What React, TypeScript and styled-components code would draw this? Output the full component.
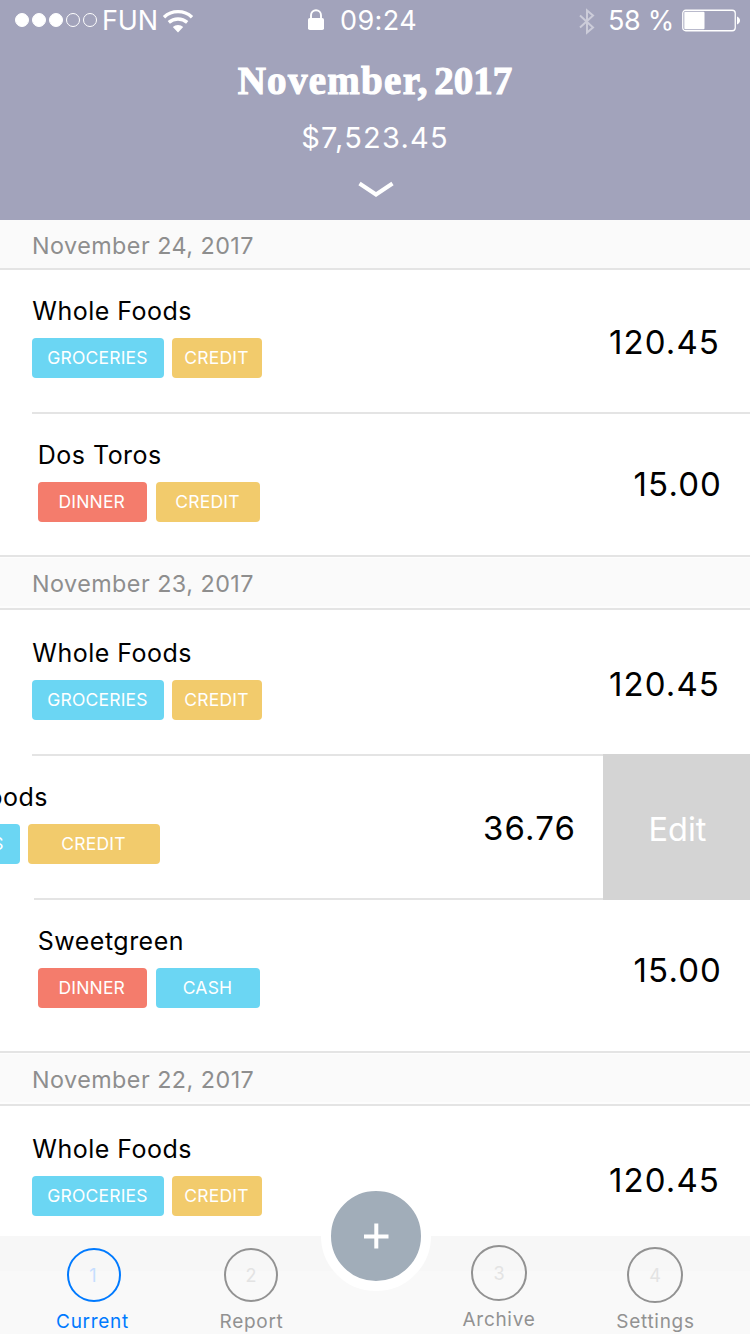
import React from "react";
import styled, { createGlobalStyle } from "styled-components";

const GlobalStyle = createGlobalStyle`
  * { box-sizing: border-box; }
  body { margin: 0; background: #fff; font-family: Inter, "Liberation Sans", sans-serif; }
`;

const colors = {
  header: "#a2a3bb",
  line: "#e4e4e4",
  blue: "#6bd6f3",
  yellow: "#f2cb6c",
  red: "#f47c6c",
  active: "#007aff",
  idle: "#929292",
};

const Screen = styled.div`
  width: 750px;
  height: 1334px;
  display: flex;
  flex-direction: column;
  overflow: hidden;
  background: #fff;
`;

const Header = styled.header`
  height: 220px;
  flex: none;
  background: ${colors.header};
  color: #fff;
  display: flex;
  flex-direction: column;
  align-items: center;
`;

const StatusBar = styled.div`
  width: 100%;
  height: 40px;
  flex: none;
  display: grid;
  grid-template-columns: 307px 1fr auto;
  font-size: 27px;
  line-height: 38px;
  padding: 0 10px 0 0;
`;

const StatusGroup = styled.div`
  display: flex;
  align-items: center;
  white-space: pre;
`;

const StatusText = styled.span<{ $left: number; $spacing: number }>`
  margin-left: ${(p) => p.$left}px;
  padding-top: 2px;
  letter-spacing: ${(p) => p.$spacing}px;
`;

const Signal = styled.div`
  display: flex;
  gap: 3px;
  padding-left: 15px;
`;

const SignalDot = styled.i<{ $on: boolean }>`
  width: 14px;
  height: 14px;
  border-radius: 50%;
  border: 1px solid #fff;
  background: ${(p) => (p.$on ? "#fff" : "transparent")};
`;

const Month = styled.h1`
  margin: 21px 0 0;
  font-family: "Liberation Serif", serif;
  font-weight: 700;
  font-size: 39px;
  line-height: 40px;
  letter-spacing: 1.3px;
  word-spacing: -5.5px;
  -webkit-text-stroke: 1.1px #fff;
`;

const Year = styled.span`
  letter-spacing: 0;
`;

const Total = styled.div`
  margin-top: 17px;
  font-size: 29px;
  line-height: 40px;
  letter-spacing: 1.2px;
`;

const Chevron = styled.svg`
  margin: 21px 0 0 1px;
`;

const List = styled.main`
  flex: 1;
  min-height: 0;
  overflow: hidden;
`;

const DayHeader = styled.h2<{ $height: number; $pad: number; $edged: boolean }>`
  margin: 0;
  height: ${(p) => p.$height}px;
  padding: ${(p) => p.$pad}px 0 0 32px;
  border-bottom: 2px solid ${colors.line};
  background: #fafafa;
  box-shadow: ${(p) => (p.$edged ? "inset 0 1px #fdfdfd, inset 0 -2px #fdfdfd" : "none")};
  color: #8e8e8e;
  font-size: 23.3px;
  font-weight: 400;
  line-height: 30px;
  letter-spacing: 0.48px;
`;

const Entry = styled.div<{ $height: number; $line: number }>`
  display: flex;
  height: ${(p) => p.$height}px;
  background:
    linear-gradient(${colors.line}, ${colors.line}) ${(p) => p.$line}px 100% / 100% 2px no-repeat;
`;

const EntryBody = styled.div<{ $top: number; $left: number; $right: number; $shift: number }>`
  width: 750px;
  flex: none;
  margin-left: ${(p) => -p.$shift}px;
  padding: ${(p) => `${p.$top}px ${p.$right}px 0 ${p.$left}px`};
  display: flex;
  justify-content: space-between;
  align-items: flex-start;
`;

const Name = styled.div`
  padding-left: 0.3px;
  font-size: 25px;
  line-height: 30px;
  letter-spacing: 0.48px;
  color: #000;
`;

const Tags = styled.div<{ $gap: number }>`
  display: flex;
  gap: ${(p) => p.$gap}px;
  margin-top: 12px;
`;

const Tag = styled.span<{ $color: string; $width: number }>`
  width: ${(p) => p.$width}px;
  height: 40px;
  padding-right: 1px;
  border-radius: 4px;
  background: ${(p) => p.$color};
  color: #fff;
  font-size: 17.5px;
  line-height: 40px;
  letter-spacing: 0.2px;
  text-align: center;
`;

const Amount = styled.div<{ $top: number }>`
  margin-top: ${(p) => p.$top}px;
  font-size: 33px;
  line-height: 40px;
  letter-spacing: 1.1px;
  color: #000;
`;

const EditButton = styled.button`
  width: 147px;
  flex: none;
  margin: -2px 0 0 -3px;
  padding: 4px 0 0 2px;
  border: 0;
  position: relative;
  background: #d4d4d4;
  color: #fff;
  font: 400 32.5px Inter, sans-serif;
`;

const TabBar = styled.nav`
  position: relative;
  height: 98px;
  flex: none;
  display: grid;
  grid-template-columns: 185px 133px 1fr 124px 189px;
  background: linear-gradient(#f7f7f7 35px, #f9f9f9 35px);
`;

const TabItem = styled.div<{ $active?: boolean; $top: number }>`
  display: flex;
  flex-direction: column;
  align-items: center;
  padding-top: ${(p) => p.$top}px;
  color: ${(p) => (p.$active ? colors.active : colors.idle)};
`;

const TabCircle = styled.div<{ $size: number; $nudge: number }>`
  width: ${(p) => p.$size}px;
  height: ${(p) => p.$size}px;
  margin-left: ${(p) => p.$nudge}px;
  border: 2px solid currentColor;
  border-radius: 50%;
  display: flex;
  align-items: center;
  justify-content: center;
`;

const TabNumber = styled.span<{ $active?: boolean }>`
  padding: 1px ${(p) => (p.$active ? 2 : 0)}px 0 0;
  font-size: 18px;
  color: ${(p) => (p.$active ? "#c6deff" : "#e3e3e3")};
`;

const TabLabel = styled.span<{ $top: number }>`
  margin-top: ${(p) => p.$top}px;
  font-size: 19px;
  line-height: 26px;
  letter-spacing: 0.7px;
`;

const AddButton = styled.button`
  position: absolute;
  left: 321px;
  top: -55px;
  width: 110px;
  height: 110px;
  border: 10px solid #fff;
  border-radius: 50%;
  background: #a1adb9;
  padding: 0;
  display: flex;
  align-items: center;
  justify-content: center;
`;

type TagData = { label: string; color: string; width: number };
type EntryData = {
  name: string;
  amount: string;
  tags: TagData[];
  height: number;
  line: number;
  top: number;
  left?: number;
  right?: number;
  gap?: number;
  amountTop: number;
  swiped?: boolean;
};
type Day = { date: string; height: number; pad: number; entries: EntryData[] };

const groceries: TagData = { label: "GROCERIES", color: colors.blue, width: 132 };
const credit = (width: number): TagData => ({ label: "CREDIT", color: colors.yellow, width });
const dinner: TagData = { label: "DINNER", color: colors.red, width: 109.5 };
const cash: TagData = { label: "CASH", color: colors.blue, width: 104 };

const days: Day[] = [
  {
    date: "November 24, 2017",
    height: 50,
    pad: 11,
    entries: [
      { name: "Whole Foods", amount: "120.45", tags: [groceries, credit(90)], height: 144, line: 32, top: 26, amountTop: 26 },
      { name: "Dos Toros", amount: "15.00", tags: [dinner, credit(104)], height: 143, line: 0, top: 26, left: 37.5, right: 28, gap: 9, amountTop: 24 },
    ],
  },
  {
    date: "November 23, 2017",
    height: 53,
    pad: 12,
    entries: [
      { name: "Whole Foods", amount: "120.45", tags: [groceries, credit(90)], height: 146, line: 32, top: 28, amountTop: 26 },
      { name: "Whole Foods", amount: "36.76", tags: [groceries, credit(132)], height: 144, line: 34, top: 26, amountTop: 26, swiped: true },
      { name: "Sweetgreen", amount: "15.00", tags: [dinner, cash], height: 153, line: 0, top: 26, left: 37.5, right: 28, gap: 9, amountTop: 24 },
    ],
  },
  {
    date: "November 22, 2017",
    height: 53,
    pad: 12,
    entries: [
      { name: "Whole Foods", amount: "120.45", tags: [groceries, credit(90)], height: 146, line: 32, top: 28, amountTop: 26 },
    ],
  },
];

const tabs = [
  { label: "Current", n: 1, size: 54, top: 12, labelTop: 7, nudge: 3, active: true },
  { label: "Report", n: 2, size: 54, top: 12, labelTop: 7, nudge: -1 },
  null,
  { label: "Archive", n: 3, size: 56, top: 9, labelTop: 6, nudge: 0 },
  { label: "Settings", n: 4, size: 56, top: 11, labelTop: 6, nudge: -1 },
];

const WifiIcon = () => (
  <svg width="32" height="24" viewBox="0 0 32 24">
    <g fill="none" stroke="#fff" strokeWidth="3.4">
      <path d="M2 8.200a20.500 20.500 0 0 1 28 0" />
      <path d="M6.800 13.400a14 14 0 0 1 18.400 0" />
    </g>
    <path d="M10.800 18a7.500 7.500 0 0 1 10.400 0L16 23.500z" fill="#fff" />
  </svg>
);

const LockIcon = () => (
  <svg width="18" height="22" viewBox="0 0 18 22">
    <path d="M4 10V6.2a5 5 0 0 1 10 0V10" fill="none" stroke="#fff" strokeWidth="1.9" />
    <rect x="1" y="9" width="16" height="12" rx="1.8" fill="#fff" />
  </svg>
);

const BluetoothIcon = () => (
  <svg width="16" height="28" viewBox="0 0 16 28">
    <path d="M1 8.500 14 20.500l-6 5V3.500l6 5L1 20.500" fill="none" stroke="#fff" strokeOpacity=".45" strokeWidth="2" />
  </svg>
);

const BatteryIcon = () => (
  <svg width="58" height="23" viewBox="0 0 58 23">
    <rect x="0.75" y="1.250" width="52.500" height="20.500" rx="3" fill="none" stroke="#fff" strokeWidth="1.300" />
    <rect x="2.300" y="2.800" width="20.200" height="17.400" rx="1" fill="#fff" />
    <path d="M55 7.500c4 1.500 4 6.500 0 8z" fill="#fff" />
  </svg>
);

const IconSlot = styled.span<{ $left: number }>`
  display: flex;
  margin-left: ${(p) => p.$left}px;
  padding-top: 1px;
`;

export default function App() {
  return (
    <Screen>
      <GlobalStyle />
      <Header>
        <StatusBar>
          <StatusGroup>
            <Signal>
              {[true, true, true, false, false].map((on, i) => (
                <SignalDot key={i} $on={on} />
              ))}
            </Signal>
            <StatusText $left={5} $spacing={-0.2}>FUN</StatusText>
            <IconSlot $left={4}><WifiIcon /></IconSlot>
          </StatusGroup>
          <StatusGroup>
            <LockIcon />
            <StatusText $left={15} $spacing={0.4}>09:24</StatusText>
          </StatusGroup>
          <StatusGroup>
            <IconSlot $left={0}><BluetoothIcon /></IconSlot>
            <StatusText $left={13} $spacing={-0.3}>58 %</StatusText>
            <IconSlot $left={8}><BatteryIcon /></IconSlot>
          </StatusGroup>
        </StatusBar>
        <Month>November, <Year>2017</Year></Month>
        <Total>$7,523.45</Total>
        <Chevron width="36" height="20" viewBox="0 0 36 20">
          <path d="M1.500 4.500 18 15.500 34.500 4.500" fill="none" stroke="#fff" strokeWidth="4" />
        </Chevron>
      </Header>
      <List>
        {days.map((day, d) => (
          <section key={day.date}>
            <DayHeader $height={day.height} $pad={day.pad} $edged={d > 0}>{day.date}</DayHeader>
            {day.entries.map((e, i) => (
              <Entry key={i} $height={e.height} $line={e.line}>
                <EntryBody $top={e.top} $left={e.left ?? 32} $right={e.right ?? 30} $shift={e.swiped ? 144 : 0}>
                  <div>
                    <Name>{e.name}</Name>
                    <Tags $gap={e.gap ?? 8}>
                      {e.tags.map((t) => (
                        <Tag key={t.label} $color={t.color} $width={t.width}>{t.label}</Tag>
                      ))}
                    </Tags>
                  </div>
                  <Amount $top={e.amountTop}>{e.amount}</Amount>
                </EntryBody>
                {e.swiped && <EditButton>Edit</EditButton>}
              </Entry>
            ))}
          </section>
        ))}
      </List>
      <TabBar>
        {tabs.map((t, i) =>
          t ? (
            <TabItem key={i} $active={t.active} $top={t.top}>
              <TabCircle $size={t.size} $nudge={t.nudge}>
                <TabNumber $active={t.active}>{t.n}</TabNumber>
              </TabCircle>
              <TabLabel $top={t.labelTop}>{t.label}</TabLabel>
            </TabItem>
          ) : (
            <span key={i} />
          )
        )}
        <AddButton aria-label="Add">
          <svg width="26" height="26" viewBox="0 0 26 26">
            <path d="M13.300 0.500v25M1 13.500h24.500" stroke="#fff" strokeWidth="4" />
          </svg>
        </AddButton>
      </TabBar>
    </Screen>
  );
}
